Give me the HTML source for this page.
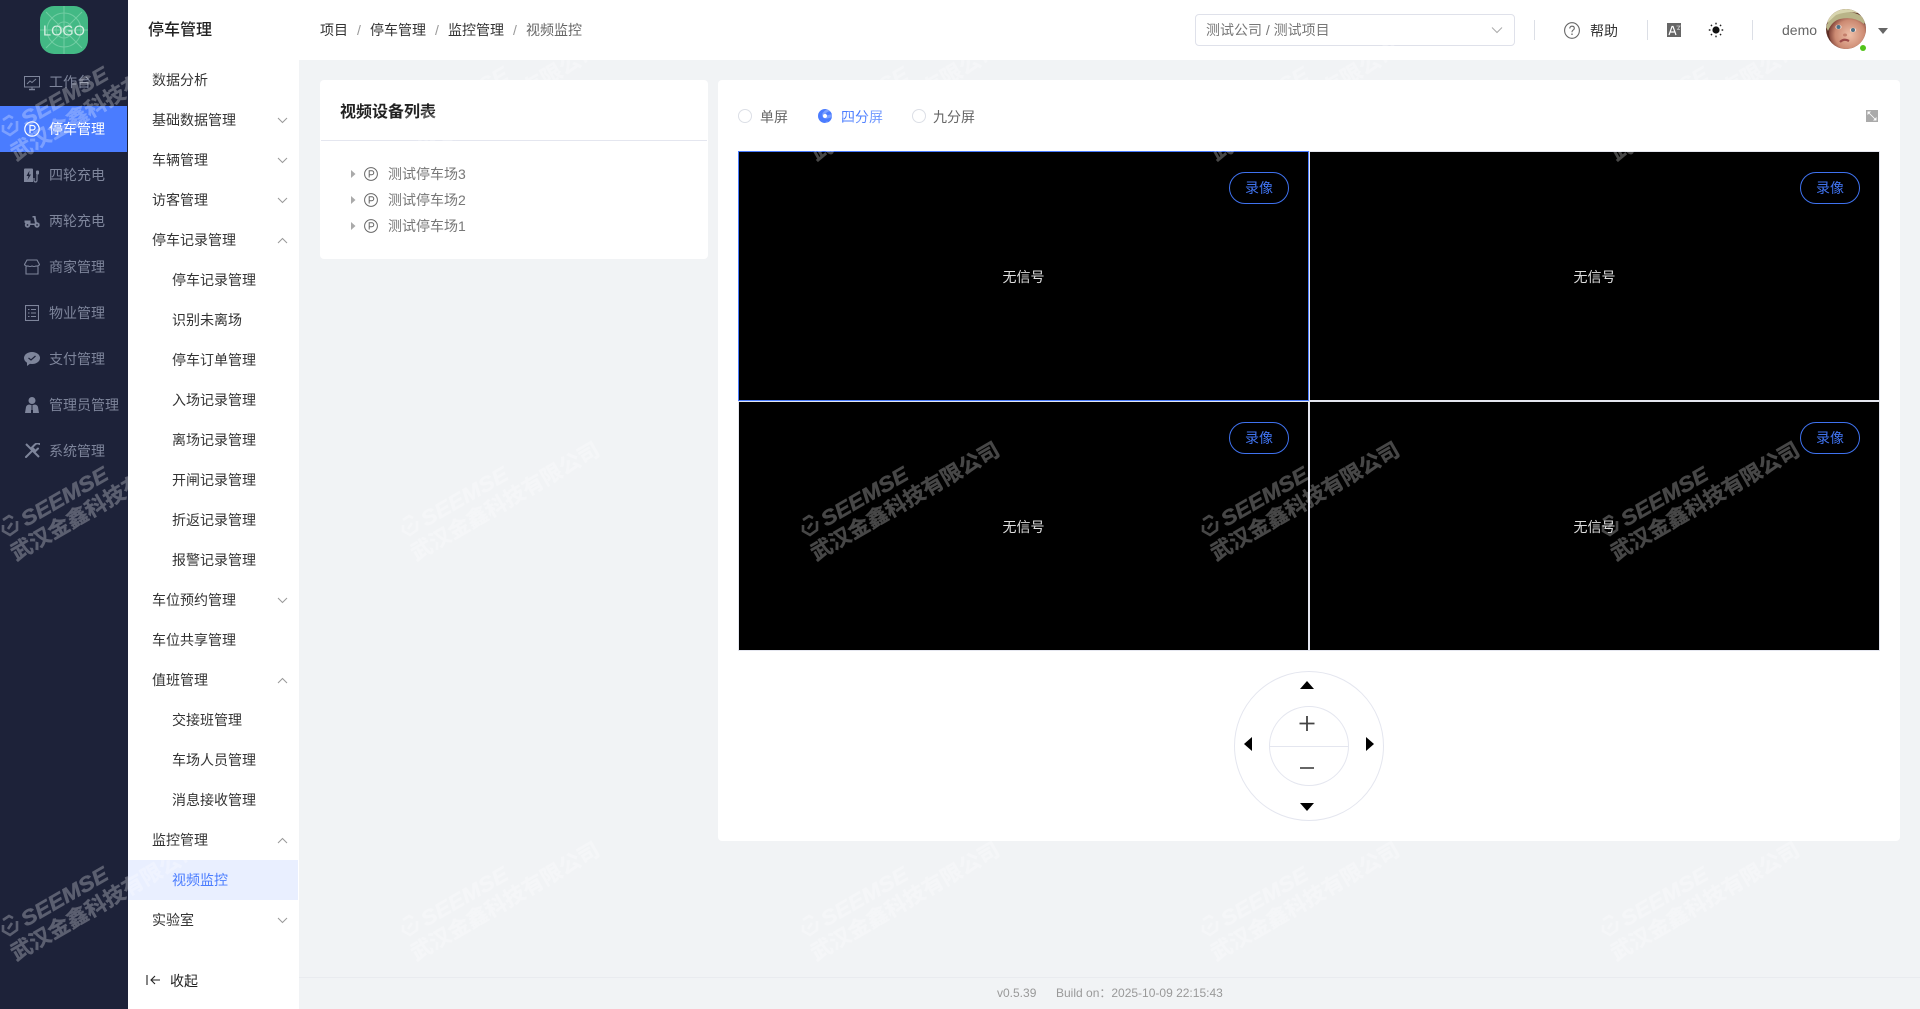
<!DOCTYPE html>
<html lang="zh-CN">
<head>
<meta charset="utf-8">
<title>视频监控</title>
<style>
html,body{margin:0;padding:0;width:1920px;height:1009px;overflow:hidden;background:#f1f3f5;font-family:"Liberation Sans","Noto Sans CJK SC",sans-serif;font-size:14px;color:#333}
#side{position:absolute;left:0;top:0;width:128px;height:1009px;background:#1d2239}
#menu{position:absolute;left:128px;top:0;width:171px;height:1009px;background:#fff}
#head{position:absolute;left:299px;top:0;width:1621px;height:60px;background:#fff}
.t{position:absolute;height:20px;line-height:20px;white-space:nowrap}
.s{color:#7e859b;left:49px}
.m{left:152px;color:#333}
.c{left:172px;color:#333}
svg{position:absolute;display:block}
.card{position:absolute;background:#fff;border-radius:4px}
.cell{position:absolute;background:#000;box-sizing:border-box;width:571px;height:250px;border:1px solid #e4e6ef}
.rec{position:absolute;box-sizing:border-box;width:60px;height:32px;line-height:30px;text-align:center;border:1px solid #3f72ef;border-radius:16px;color:#3f72ef}
.ns{position:absolute;width:100%;text-align:center;color:#ddd;line-height:20px}
.radio{position:absolute;box-sizing:border-box;width:14px;height:14px;border-radius:50%;border:1px solid #dcdfe6;background:#fff;top:109px}
.div{position:absolute;width:1px;height:20px;background:#dcdfe6;top:20px}
.bs{position:absolute;color:#999;top:20px;line-height:20px}
.wi{fill:none;stroke-width:2.600}
.w1{font-size:21px;font-style:italic;stroke-width:.4}
.w2{font-size:21px;stroke-width:.4}
</style>
</head>
<body>
<div id="side"></div>
<div id="menu"></div>
<div id="head"></div>

<!-- logo -->
<svg style="left:40px;top:6px" width="48" height="48" viewBox="0 0 48 48">
<rect width="48" height="48" rx="14" fill="#43b985"/>
<g stroke="#86d6b1" stroke-width="1" fill="none" opacity=".7">
<circle cx="24" cy="24" r="17"/><circle cx="24" cy="24" r="8"/>
<path d="M0 24H48M24 0V48M6 6L42 42M42 6L6 42"/>
</g>
<text x="24" y="29.500" text-anchor="middle" font-family="Liberation Sans" font-size="14.500" fill="#d5efe2">LOGO</text>
</svg>

<!-- side active -->
<div style="position:absolute;left:0;top:106px;width:127px;height:46px;background:#4a7cff"></div>

<!-- side icons -->
<svg style="left:24px;top:76px" width="16" height="15" viewBox="0 0 16 15" fill="none" stroke="#7e859b">
<rect x=".5" y=".5" width="15" height="10.500" stroke-width="1"/><path d="M3 8L6 5L8 6.500L12 3" stroke-width="1"/><path d="M5 13.500H11" stroke-width="1.500"/><path d="M8 11V13" stroke-width="1"/>
</svg>
<svg style="left:24px;top:121px" width="16" height="16" viewBox="0 0 16 16" fill="none" stroke="#fff">
<circle cx="8" cy="8" r="7.200" stroke-width="1.200"/><path d="M6 12V4.500H8.800A2.200 2.200 0 0 1 8.800 9H6" stroke-width="1.200"/>
</svg>
<svg style="left:24px;top:168px" width="16" height="15" viewBox="0 0 16 15" fill="#7e859b">
<path d="M0 14V1.500Q0 .500 1 .500H8Q9 .500 9 1.500V14Z"/><path d="M5.500 2.500L2.500 8H4.500L3.500 12L7 6.500H5Z" fill="#1d2239"/>
<path d="M10 10V12.500A1.500 1.500 0 0 0 13 12.500V6.500" fill="none" stroke="#7e859b" stroke-width="1.200"/><rect x="12" y="2.500" width="3" height="4" rx="1"/>
</svg>
<svg style="left:24px;top:215px" width="16" height="13" viewBox="0 0 16 13" fill="#7e859b">
<path d="M8.500 1H11.500L13 8.500H15.500V10H6L5 8.500H11L9.800 2.500H8.500Z"/><path d="M.5 5.500H6.500L6.500 8.500H1.500L.5 7.500Z"/><circle cx="3.500" cy="10" r="2.700"/><circle cx="13" cy="10" r="2.700"/><circle cx="3.500" cy="10" r=".9" fill="#1d2239"/><circle cx="13" cy="10" r=".9" fill="#1d2239"/>
</svg>
<svg style="left:24px;top:259px" width="16" height="16" viewBox="0 0 16 16" fill="none" stroke="#7e859b" stroke-width="1.100">
<path d="M3 1H13L15.500 5.500Q14.500 7.500 12 7Q10 8 8 7Q6 8 4 7Q1.500 7.500 .5 5.500Z"/><path d="M2 7.500V15H14V7.500"/>
</svg>
<svg style="left:25px;top:305px" width="14" height="16" viewBox="0 0 14 16" fill="none" stroke="#7e859b" stroke-width="1.100">
<rect x=".5" y=".5" width="13" height="15"/><path d="M3 4.500H4.500M6 4.500H11M3 8H4.500M6 8H11M3 11.500H4.500M6 11.500H11"/>
</svg>
<svg style="left:24px;top:352px" width="16" height="14" viewBox="0 0 16 14">
<ellipse cx="8" cy="6" rx="8" ry="6" fill="#7e859b"/><path d="M3 10L3 14L7 11Z" fill="#7e859b"/><path d="M4.500 6L7 8L11.500 4" fill="none" stroke="#1d2239" stroke-width="1.200"/>
</svg>
<svg style="left:25px;top:397px" width="14" height="16" viewBox="0 0 14 16" fill="#7e859b">
<circle cx="7" cy="3.500" r="3.500"/><path d="M0 16L1 10Q1.500 8 4 7.500L6 8V16ZM14 16L13 10Q12.500 8 10 7.500L8 8V16Z"/><path d="M6.500 8H7.500V13H6.500Z"/>
</svg>
<svg style="left:24px;top:443px" width="16" height="16" viewBox="0 0 16 16" fill="none" stroke="#7e859b" stroke-width="2">
<path d="M2 1L15 14"/><path d="M14 5.500L11.500 8L8 4.500L10.500 2A4 4 0 0 1 15.500 1M8 8L2 14" stroke-linecap="round"/>
</svg>

<div class="t s" style="top:72px">工作台</div>
<div class="t s" style="top:119px;color:#fff">停车管理</div>
<div class="t s" style="top:165px">四轮充电</div>
<div class="t s" style="top:211px">两轮充电</div>
<div class="t s" style="top:257px">商家管理</div>
<div class="t s" style="top:303px">物业管理</div>
<div class="t s" style="top:349px">支付管理</div>
<div class="t s" style="top:395px">管理员管理</div>
<div class="t s" style="top:441px">系统管理</div>

<!-- sub menu -->
<div class="t" style="left:148px;top:21px;font-size:16px;font-weight:500;color:#222">停车管理</div>
<div style="position:absolute;left:128px;top:860px;width:170px;height:40px;background:#e9efff"></div>

<div class="t m" style="top:70px">数据分析</div>
<div class="t m" style="top:110px">基础数据管理</div>
<div class="t m" style="top:150px">车辆管理</div>
<div class="t m" style="top:190px">访客管理</div>
<div class="t m" style="top:230px">停车记录管理</div>
<div class="t c" style="top:270px">停车记录管理</div>
<div class="t c" style="top:310px">识别未离场</div>
<div class="t c" style="top:350px">停车订单管理</div>
<div class="t c" style="top:390px">入场记录管理</div>
<div class="t c" style="top:430px">离场记录管理</div>
<div class="t c" style="top:470px">开闸记录管理</div>
<div class="t c" style="top:510px">折返记录管理</div>
<div class="t c" style="top:550px">报警记录管理</div>
<div class="t m" style="top:590px">车位预约管理</div>
<div class="t m" style="top:630px">车位共享管理</div>
<div class="t m" style="top:670px">值班管理</div>
<div class="t c" style="top:710px">交接班管理</div>
<div class="t c" style="top:750px">车场人员管理</div>
<div class="t c" style="top:790px">消息接收管理</div>
<div class="t m" style="top:830px">监控管理</div>
<div class="t c" style="top:870px;color:#4a7cff">视频监控</div>
<div class="t m" style="top:910px">实验室</div>

<svg style="left:277px;top:117px" width="11" height="7" fill="none" stroke="#999"><path d="M1 1L5.500 5.500L10 1"/></svg>
<svg style="left:277px;top:157px" width="11" height="7" fill="none" stroke="#999"><path d="M1 1L5.500 5.500L10 1"/></svg>
<svg style="left:277px;top:197px" width="11" height="7" fill="none" stroke="#999"><path d="M1 1L5.500 5.500L10 1"/></svg>
<svg style="left:277px;top:237px" width="11" height="7" fill="none" stroke="#999"><path d="M1 6L5.500 1.500L10 6"/></svg>
<svg style="left:277px;top:597px" width="11" height="7" fill="none" stroke="#999"><path d="M1 1L5.500 5.500L10 1"/></svg>
<svg style="left:277px;top:677px" width="11" height="7" fill="none" stroke="#999"><path d="M1 6L5.500 1.500L10 6"/></svg>
<svg style="left:277px;top:837px" width="11" height="7" fill="none" stroke="#999"><path d="M1 6L5.500 1.500L10 6"/></svg>
<svg style="left:277px;top:917px" width="11" height="7" fill="none" stroke="#999"><path d="M1 1L5.500 5.500L10 1"/></svg>

<svg style="left:146px;top:974px" width="15" height="12" fill="none" stroke="#222" stroke-width="1.100"><path d="M1 1V11M14 6H5M9 2L5 6L9 10"/></svg>
<div class="t" style="left:170px;top:971px;color:#222">收起</div>

<!-- header -->
<div class="t" style="left:320px;top:20px;color:#333">项目</div><div class="bs" style="left:357px">/</div>
<div class="t" style="left:370px;top:20px;color:#333">停车管理</div><div class="bs" style="left:435px">/</div>
<div class="t" style="left:448px;top:20px;color:#333">监控管理</div><div class="bs" style="left:513px">/</div>
<div class="t" style="left:526px;top:20px;color:#666">视频监控</div>

<div style="position:absolute;left:1195px;top:14px;width:320px;height:32px;box-sizing:border-box;border:1px solid #dfe1ea;border-radius:4px;background:#fff"></div>
<div class="t" style="left:1206px;top:20px;color:#777">测试公司 / 测试项目</div>
<svg style="left:1491px;top:26px" width="12" height="8" fill="none" stroke="#aaa"><path d="M1 1.500L6 6.500L11 1.500"/></svg>

<div class="div" style="left:1534px"></div>
<svg style="left:1564px;top:22px" width="16" height="17" viewBox="0 0 16 17" fill="none" stroke="#666" stroke-width="1.100">
<ellipse cx="8" cy="8.500" rx="7.400" ry="7.800"/><path d="M5.700 6.500Q6 4.200 8 4.200Q10.300 4.200 10.300 6.300Q10.300 7.500 8.800 8.300Q8 8.800 8 10.300"/><path d="M8 11.500V13" stroke-width="1.300"/>
</svg>
<div class="t" style="left:1590px;top:21px;color:#333">帮助</div>
<div class="div" style="left:1647px"></div>
<svg style="left:1667px;top:23px" width="14" height="14" viewBox="0 0 14 14">
<rect width="14" height="14" fill="#666"/><path d="M2 12L5 3.500H6L9 12M3.200 9H7.800" fill="none" stroke="#fff" stroke-width="1.200"/><path d="M9.500 3H13L10.500 6.500H13" stroke="#ccc" stroke-width=".8" fill="none"/>
</svg>
<svg style="left:1708px;top:22px" width="16" height="16" viewBox="0 0 16 16">
<circle cx="8" cy="8" r="3.600" fill="#111"/><g stroke="#222" stroke-width="1.400"><path d="M8 .8V2.400M8 13.600V15.200M.8 8H2.400M13.600 8H15.200M2.900 2.900L4 4M12 12L13.100 13.100M2.900 13.100L4 12M12 4L13.100 2.900"/></g>
</svg>
<div class="div" style="left:1752px"></div>
<div class="t" style="left:1782px;top:20px;color:#666">demo</div>

<svg style="left:1826px;top:9px" width="40" height="40" viewBox="0 0 40 40">
<defs>
<clipPath id="av"><circle cx="20" cy="20" r="20"/></clipPath>
<radialGradient id="fc" cx=".55" cy=".55" r=".6"><stop offset="0" stop-color="#eebfa8"/><stop offset=".65" stop-color="#cc8a72"/><stop offset="1" stop-color="#6b2f28"/></radialGradient>
</defs>
<g clip-path="url(#av)">
<rect width="40" height="40" fill="#5e2f26"/>
<ellipse cx="22" cy="24" rx="19" ry="19" fill="url(#fc)"/>
<path d="M0 18Q5 3 20 3Q34 3 40 12L38 15Q28 7 14 10Q6 12 2 22Z" fill="#b9b488"/>
<path d="M0 0H40V7Q26 0 10 6L0 15Z" fill="#d8d5ae"/>
<ellipse cx="12.500" cy="18" rx="3.200" ry="2.300" fill="#fff" opacity=".6"/><ellipse cx="27" cy="21" rx="3.200" ry="2.300" fill="#fff" opacity=".6"/>
<circle cx="12.500" cy="18" r="2" fill="#4d6f84"/><circle cx="27" cy="21" r="2" fill="#4d6f84"/>
<ellipse cx="19" cy="26" rx="2" ry="1.500" fill="#c47f6b"/>
<path d="M14 33Q18 29 23 32" stroke="#9c4a48" stroke-width="2.200" fill="none"/>
</g>
</svg>
<div style="position:absolute;left:1860px;top:45px;width:6px;height:6px;border-radius:50%;background:#52c41a"></div>
<svg style="left:1878px;top:28px" width="10" height="6"><path d="M0 0H10L5 6Z" fill="#666"/></svg>

<!-- left card -->
<div class="card" style="left:320px;top:80px;width:388px;height:179px"></div>
<div class="t" style="left:340px;top:103px;font-size:16px;font-weight:700;color:#222">视频设备列表</div>
<div style="position:absolute;left:321px;top:140px;width:386px;height:1px;background:#e4e6ef"></div>

<svg style="left:350px;top:170px" width="6" height="8"><path d="M1 0L5.500 4L1 8Z" fill="#aaa"/></svg>
<svg style="left:350px;top:196px" width="6" height="8"><path d="M1 0L5.500 4L1 8Z" fill="#aaa"/></svg>
<svg style="left:350px;top:222px" width="6" height="8"><path d="M1 0L5.500 4L1 8Z" fill="#aaa"/></svg>
<svg style="left:364px;top:167px" width="14" height="14" fill="none" stroke="#666" viewBox="0 0 14 14"><circle cx="7" cy="7" r="6.400"/><path d="M5.200 10.500V3.800H7.800A1.900 1.900 0 0 1 7.800 7.700H5.200"/></svg>
<svg style="left:364px;top:193px" width="14" height="14" fill="none" stroke="#666" viewBox="0 0 14 14"><circle cx="7" cy="7" r="6.400"/><path d="M5.200 10.500V3.800H7.800A1.900 1.900 0 0 1 7.800 7.700H5.200"/></svg>
<svg style="left:364px;top:219px" width="14" height="14" fill="none" stroke="#666" viewBox="0 0 14 14"><circle cx="7" cy="7" r="6.400"/><path d="M5.200 10.500V3.800H7.800A1.900 1.900 0 0 1 7.800 7.700H5.200"/></svg>
<div class="t" style="left:388px;top:164px;color:#777">测试停车场3</div>
<div class="t" style="left:388px;top:190px;color:#777">测试停车场2</div>
<div class="t" style="left:388px;top:216px;color:#777">测试停车场1</div>

<!-- right card -->
<div class="card" style="left:718px;top:80px;width:1182px;height:761px"></div>
<div class="radio" style="left:738px"></div>
<div class="t" style="left:760px;top:107px;color:#666">单屏</div>
<div class="radio" style="left:818px;border:5px solid #4a7cff"></div>
<div class="t" style="left:841px;top:107px;color:#4a7cff">四分屏</div>
<div class="radio" style="left:912px"></div>
<div class="t" style="left:933px;top:107px;color:#666">九分屏</div>
<svg style="left:1866px;top:110px" width="12" height="12" viewBox="0 0 12 12"><rect width="12" height="12" fill="#aaa"/><path d="M1.500 1.500H5L1.500 5ZM10.500 10.500H7L10.500 7Z" fill="#fff"/><path d="M3 3L9 9" stroke="#fff" stroke-width=".8"/></svg>

<div class="cell" style="left:738px;top:151px;border-color:#4a7cff">
  <div class="ns" style="top:115px">无信号</div>
  <div class="rec" style="right:19px;top:20px">录像</div>
</div>
<div class="cell" style="left:1309px;top:151px">
  <div class="ns" style="top:115px">无信号</div>
  <div class="rec" style="right:19px;top:20px">录像</div>
</div>
<div class="cell" style="left:738px;top:401px">
  <div class="ns" style="top:115px">无信号</div>
  <div class="rec" style="right:19px;top:20px">录像</div>
</div>
<div class="cell" style="left:1309px;top:401px">
  <div class="ns" style="top:115px">无信号</div>
  <div class="rec" style="right:19px;top:20px">录像</div>
</div>

<!-- ptz -->
<svg style="left:1230px;top:667px" width="160" height="160" viewBox="0 0 160 160">
<circle cx="79" cy="79" r="74.500" fill="#fff" stroke="#e4e6ef" stroke-width="1"/>
<circle cx="79" cy="79" r="39.500" fill="#fff" stroke="#e4e6ef" stroke-width="1"/>
<path d="M39.500 79.500H118.500" stroke="#e4e6ef"/>
<path d="M70 22L77 14L84 22Z" fill="#000"/>
<path d="M70 136H84L77 144Z" fill="#000"/>
<path d="M22 70V84L14 77Z" fill="#000"/>
<path d="M136 70V84L144 77Z" fill="#000"/>
<path d="M77 49V64M69.500 56.500H84.500" stroke="#444" stroke-width="1.800"/>
<path d="M70 101H84" stroke="#666" stroke-width="2"/>
</svg>

<!-- footer -->
<div style="position:absolute;left:299px;top:977px;width:1621px;height:1px;background:#e9ebef"></div>
<div class="t" style="left:997px;top:983px;font-size:12px;color:#999">v0.5.39</div>
<div class="t" style="left:1056px;top:983px;font-size:12px;color:#999">Build on：2025-10-09 22:15:43</div>

<!-- watermark -->
<svg style="left:0;top:0;pointer-events:none" width="1920" height="1009" viewBox="0 0 1920 1009">
<g fill="#fff" stroke="#fff" opacity=".28" font-family="Liberation Sans,Noto Sans CJK SC,sans-serif" font-weight="700">
<g transform="translate(0,0)"><path class="wi" d="M3 120L9 116L13 118M17 121V130L10 135L3 131V125M8 129L12 123"/><text class="w1" transform="translate(26,127) rotate(-30)" textLength="97" lengthAdjust="spacingAndGlyphs">SEEMSE</text><text class="w2" transform="translate(16,161) rotate(-30)" textLength="214" lengthAdjust="spacingAndGlyphs">武汉金鑫科技有限公司</text></g>
<g transform="translate(400,0)"><path class="wi" d="M3 120L9 116L13 118M17 121V130L10 135L3 131V125M8 129L12 123"/><text class="w1" transform="translate(26,127) rotate(-30)" textLength="97" lengthAdjust="spacingAndGlyphs">SEEMSE</text><text class="w2" transform="translate(16,161) rotate(-30)" textLength="214" lengthAdjust="spacingAndGlyphs">武汉金鑫科技有限公司</text></g>
<g transform="translate(800,0)"><path class="wi" d="M3 120L9 116L13 118M17 121V130L10 135L3 131V125M8 129L12 123"/><text class="w1" transform="translate(26,127) rotate(-30)" textLength="97" lengthAdjust="spacingAndGlyphs">SEEMSE</text><text class="w2" transform="translate(16,161) rotate(-30)" textLength="214" lengthAdjust="spacingAndGlyphs">武汉金鑫科技有限公司</text></g>
<g transform="translate(1200,0)"><path class="wi" d="M3 120L9 116L13 118M17 121V130L10 135L3 131V125M8 129L12 123"/><text class="w1" transform="translate(26,127) rotate(-30)" textLength="97" lengthAdjust="spacingAndGlyphs">SEEMSE</text><text class="w2" transform="translate(16,161) rotate(-30)" textLength="214" lengthAdjust="spacingAndGlyphs">武汉金鑫科技有限公司</text></g>
<g transform="translate(1600,0)"><path class="wi" d="M3 120L9 116L13 118M17 121V130L10 135L3 131V125M8 129L12 123"/><text class="w1" transform="translate(26,127) rotate(-30)" textLength="97" lengthAdjust="spacingAndGlyphs">SEEMSE</text><text class="w2" transform="translate(16,161) rotate(-30)" textLength="214" lengthAdjust="spacingAndGlyphs">武汉金鑫科技有限公司</text></g>
<g transform="translate(0,400)"><path class="wi" d="M3 120L9 116L13 118M17 121V130L10 135L3 131V125M8 129L12 123"/><text class="w1" transform="translate(26,127) rotate(-30)" textLength="97" lengthAdjust="spacingAndGlyphs">SEEMSE</text><text class="w2" transform="translate(16,161) rotate(-30)" textLength="214" lengthAdjust="spacingAndGlyphs">武汉金鑫科技有限公司</text></g>
<g transform="translate(400,400)"><path class="wi" d="M3 120L9 116L13 118M17 121V130L10 135L3 131V125M8 129L12 123"/><text class="w1" transform="translate(26,127) rotate(-30)" textLength="97" lengthAdjust="spacingAndGlyphs">SEEMSE</text><text class="w2" transform="translate(16,161) rotate(-30)" textLength="214" lengthAdjust="spacingAndGlyphs">武汉金鑫科技有限公司</text></g>
<g transform="translate(800,400)"><path class="wi" d="M3 120L9 116L13 118M17 121V130L10 135L3 131V125M8 129L12 123"/><text class="w1" transform="translate(26,127) rotate(-30)" textLength="97" lengthAdjust="spacingAndGlyphs">SEEMSE</text><text class="w2" transform="translate(16,161) rotate(-30)" textLength="214" lengthAdjust="spacingAndGlyphs">武汉金鑫科技有限公司</text></g>
<g transform="translate(1200,400)"><path class="wi" d="M3 120L9 116L13 118M17 121V130L10 135L3 131V125M8 129L12 123"/><text class="w1" transform="translate(26,127) rotate(-30)" textLength="97" lengthAdjust="spacingAndGlyphs">SEEMSE</text><text class="w2" transform="translate(16,161) rotate(-30)" textLength="214" lengthAdjust="spacingAndGlyphs">武汉金鑫科技有限公司</text></g>
<g transform="translate(1600,400)"><path class="wi" d="M3 120L9 116L13 118M17 121V130L10 135L3 131V125M8 129L12 123"/><text class="w1" transform="translate(26,127) rotate(-30)" textLength="97" lengthAdjust="spacingAndGlyphs">SEEMSE</text><text class="w2" transform="translate(16,161) rotate(-30)" textLength="214" lengthAdjust="spacingAndGlyphs">武汉金鑫科技有限公司</text></g>
<g transform="translate(0,800)"><path class="wi" d="M3 120L9 116L13 118M17 121V130L10 135L3 131V125M8 129L12 123"/><text class="w1" transform="translate(26,127) rotate(-30)" textLength="97" lengthAdjust="spacingAndGlyphs">SEEMSE</text><text class="w2" transform="translate(16,161) rotate(-30)" textLength="214" lengthAdjust="spacingAndGlyphs">武汉金鑫科技有限公司</text></g>
<g transform="translate(400,800)"><path class="wi" d="M3 120L9 116L13 118M17 121V130L10 135L3 131V125M8 129L12 123"/><text class="w1" transform="translate(26,127) rotate(-30)" textLength="97" lengthAdjust="spacingAndGlyphs">SEEMSE</text><text class="w2" transform="translate(16,161) rotate(-30)" textLength="214" lengthAdjust="spacingAndGlyphs">武汉金鑫科技有限公司</text></g>
<g transform="translate(800,800)"><path class="wi" d="M3 120L9 116L13 118M17 121V130L10 135L3 131V125M8 129L12 123"/><text class="w1" transform="translate(26,127) rotate(-30)" textLength="97" lengthAdjust="spacingAndGlyphs">SEEMSE</text><text class="w2" transform="translate(16,161) rotate(-30)" textLength="214" lengthAdjust="spacingAndGlyphs">武汉金鑫科技有限公司</text></g>
<g transform="translate(1200,800)"><path class="wi" d="M3 120L9 116L13 118M17 121V130L10 135L3 131V125M8 129L12 123"/><text class="w1" transform="translate(26,127) rotate(-30)" textLength="97" lengthAdjust="spacingAndGlyphs">SEEMSE</text><text class="w2" transform="translate(16,161) rotate(-30)" textLength="214" lengthAdjust="spacingAndGlyphs">武汉金鑫科技有限公司</text></g>
<g transform="translate(1600,800)"><path class="wi" d="M3 120L9 116L13 118M17 121V130L10 135L3 131V125M8 129L12 123"/><text class="w1" transform="translate(26,127) rotate(-30)" textLength="97" lengthAdjust="spacingAndGlyphs">SEEMSE</text><text class="w2" transform="translate(16,161) rotate(-30)" textLength="214" lengthAdjust="spacingAndGlyphs">武汉金鑫科技有限公司</text></g>
</g>
</svg>
</body>
</html>
